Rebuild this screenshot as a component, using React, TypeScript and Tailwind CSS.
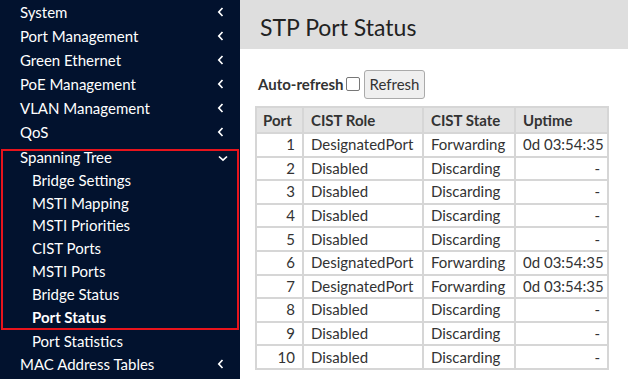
import React from "react";

const menuTop = ["System", "Port Management", "Green Ethernet", "PoE Management", "VLAN Management", "QoS"];
const subs = ["Bridge Settings", "MSTI Mapping", "MSTI Priorities", "CIST Ports", "MSTI Ports", "Bridge Status", "Port Status"];

const rows: [number, string, string, string][] = [
  [1, "DesignatedPort", "Forwarding", "0d 03:54:35"],
  [2, "Disabled", "Discarding", "-"],
  [3, "Disabled", "Discarding", "-"],
  [4, "Disabled", "Discarding", "-"],
  [5, "Disabled", "Discarding", "-"],
  [6, "DesignatedPort", "Forwarding", "0d 03:54:35"],
  [7, "DesignatedPort", "Forwarding", "0d 03:54:35"],
  [8, "Disabled", "Discarding", "-"],
  [9, "Disabled", "Discarding", "-"],
  [10, "Disabled", "Discarding", "-"],
];

function ChevLeft() {
  return (
    <svg width="7" height="10" viewBox="0 0 7 10" className="shrink-0">
      <path d="M5.5 1 L1.8 5 L5.5 9" stroke="#fff" strokeWidth="1.7" fill="none" />
    </svg>
  );
}
function ChevDown() {
  return (
    <svg width="10" height="7" viewBox="0 0 10 7" className="shrink-0 mt-[4px]">
      <path d="M1 1.5 L5 5.2 L9 1.5" stroke="#fff" strokeWidth="1.7" fill="none" />
    </svg>
  );
}

const cell = "border-2 border-[#d6d6d6] whitespace-nowrap overflow-hidden";

export default function App() {
  return (
    <div
      className="flex w-[628px] h-[379px] overflow-hidden bg-white"
      style={{ fontFamily: "'Source Sans Pro', Lato, 'Liberation Sans', sans-serif" }}
    >
      <div className="w-[240px] shrink-0 bg-[#02122e] text-white text-[15px]">
        {menuTop.map((m) => (
          <div key={m} className="flex items-center justify-between h-[24px] pl-[20px] pr-[16px]">
            <span>{m}</span>
            <ChevLeft />
          </div>
        ))}
        <div className="mx-[1px] border-2 border-[#e8141c] mt-[5px]">
          <div className="flex items-start justify-between h-[17.6px] pl-[17px] pr-[9px] leading-[12px]">
            <span>Spanning Tree</span>
            <ChevDown />
          </div>
          {subs.map((s) => (
            <div
              key={s}
              className={`flex items-center h-[22.8px] pl-[29px] ${s === "Port Status" ? "font-bold" : ""}`}
            >
              {s}
            </div>
          ))}
        </div>
        <div className="flex items-center h-[22px] pl-[32px]">Port Statistics</div>
        <div className="flex items-center justify-between h-[24px] pl-[20px] pr-[16px]">
          <span>MAC Address Tables</span>
          <ChevLeft />
        </div>
      </div>
      <div className="flex-1 flex flex-col">
        <div className="h-[49px] bg-[#dedede] flex items-center pt-[5px] pl-[20px] text-[23px] text-[#222] shrink-0">
          STP Port Status
        </div>
        <div className="pl-[15px] pt-[20px] text-[#333] text-[15px]">
          <div className="flex items-center h-[30px]">
            <span className="font-bold ml-[3px]">Auto-refresh</span>
            <span className="inline-block w-[14px] h-[14px] border border-[#777] rounded-[2px] bg-white ml-[2px]" />
            <button className="ml-[4px] h-[29px] px-[5px] border border-[#aaa] rounded-[3px] bg-[#efefef] text-[#333] text-[15px]">
              Refresh
            </button>
          </div>
          <table className="mt-[7px] border-collapse table-fixed w-[352px] text-[15px] leading-none">
            <colgroup>
              <col className="w-[47px]" />
              <col className="w-[120px]" />
              <col className="w-[92px]" />
              <col className="w-[93px]" />
            </colgroup>
            <thead>
              <tr className="bg-[#e3e3e3]">
                <th className={`${cell} h-[26px] px-[6px] text-left font-bold`}>Port</th>
                <th className={`${cell} px-[7px] text-left font-bold`}>CIST Role</th>
                <th className={`${cell} px-[7px] text-left font-bold`}>CIST State</th>
                <th className={`${cell} px-[7px] text-left font-bold`}>Uptime</th>
              </tr>
            </thead>
            <tbody>
              {rows.map((r) => (
                <tr key={r[0]}>
                  <td className={`${cell} h-[23.6px] px-[7px] text-right`}>{r[0]}</td>
                  <td className={`${cell} px-[7px]`}>{r[1]}</td>
                  <td className={`${cell} px-[7px]`}>{r[2]}</td>
                  <td className={`${cell} px-[7px] text-right`}>{r[3]}</td>
                </tr>
              ))}
            </tbody>
          </table>
        </div>
      </div>
    </div>
  );
}
